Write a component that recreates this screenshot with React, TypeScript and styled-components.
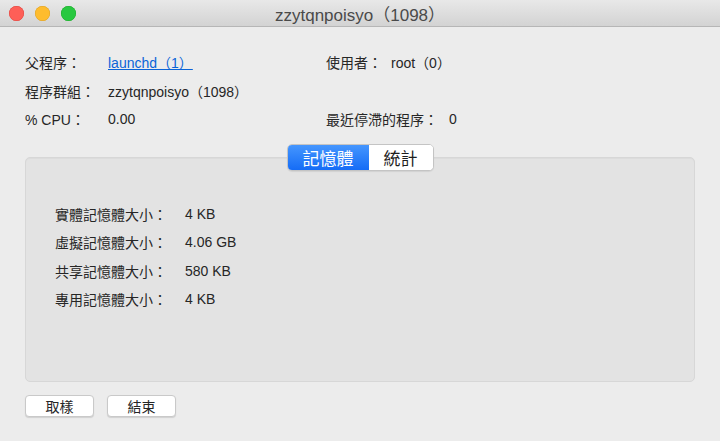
import React from "react";
import styled, { createGlobalStyle } from "styled-components";

const GlobalStyle = createGlobalStyle`
  html, body {
    margin: 0;
    padding: 0;
    background: #ececec;
  }
  body {
    font-family: "Liberation Sans", "Noto Sans CJK TC", sans-serif;
    color: #262626;
  }
`;

const Window = styled.div`
  width: 720px;
  height: 441px;
  display: flex;
  flex-direction: column;
  background: #ececec;
  overflow: hidden;
`;

const TitleBar = styled.div`
  height: 26px;
  flex: none;
  display: flex;
  align-items: center;
  position: relative;
  background: linear-gradient(#e8e8e8, #d3d3d3);
  border-bottom: 1px solid #b6b6b6;
`;

const Lights = styled.div`
  display: flex;
  gap: 11px;
  padding-left: 9px;
`;

const Light = styled.span<{ $fill: string; $edge: string }>`
  width: 15px;
  height: 15px;
  border-radius: 50%;
  background: ${(p) => p.$fill};
  box-shadow: inset 0 0 0 0.5px ${(p) => p.$edge};
`;

const Title = styled.div`
  position: absolute;
  left: 0;
  right: 0;
  text-align: center;
  font-size: 17px;
  color: #4a4a4a;
  pointer-events: none;
`;

const Body = styled.div`
  flex: 1;
  display: flex;
  flex-direction: column;
  padding: 21px 25px 0;
`;

const InfoGrid = styled.div`
  display: grid;
  grid-template-columns: 83px 218px 65px 1fr;
  grid-auto-rows: 28.5px;
  align-items: center;
  font-size: 14px;
`;

const Label = styled.span`
  white-space: nowrap;
`;

const Value = styled.span<{ $indent?: number }>`
  white-space: nowrap;
  padding-left: ${(p) => p.$indent ?? 0}px;
`;

const Link = styled.a`
  color: #0a64d8;
  text-decoration: underline;
  cursor: pointer;
`;

const TabArea = styled.div`
  display: flex;
  flex-direction: column;
  align-items: center;
  margin-top: 10px;
`;

const Segmented = styled.div`
  display: flex;
  height: 27px;
  border-radius: 5px;
  border: 1px solid #c4c4c4;
  box-sizing: border-box;
  overflow: hidden;
  position: relative;
  z-index: 1;
  background: #fff;
  box-shadow: 0 1px 1px rgba(0, 0, 0, 0.08);
`;

const Segment = styled.div<{ $active?: boolean; $w: number }>`
  width: ${(p) => p.$w}px;
  display: flex;
  align-items: center;
  justify-content: center;
  font-size: 17px;
  color: ${(p) => (p.$active ? "#fff" : "#1e1e1e")};
  background: ${(p) =>
    p.$active ? "linear-gradient(#4596fe, #156cf6)" : "#ffffff"};
`;

const Panel = styled.div`
  align-self: stretch;
  margin-top: -14px;
  height: 225px;
  box-sizing: border-box;
  background: #e3e3e3;
  border: 1px solid #d7d7d7;
  border-radius: 5px;
  box-shadow: inset 0 1px 1px rgba(0, 0, 0, 0.03);
  padding: 42px 0 0 29px;
`;

const MemGrid = styled.div`
  display: grid;
  grid-template-columns: 130px 1fr;
  grid-auto-rows: 28.5px;
  align-items: center;
  font-size: 14px;
`;

const ButtonRow = styled.div`
  display: flex;
  gap: 13px;
  margin-top: 13px;
`;

const Button = styled.button`
  width: 69px;
  height: 22px;
  padding: 0;
  background: #fff;
  border: 1px solid #c9c9c9;
  border-radius: 4px;
  box-shadow: 0 1px 1px rgba(0, 0, 0, 0.12);
  font-family: "Liberation Sans", "Noto Sans CJK TC", sans-serif;
  font-size: 14px;
  color: #262626;
`;

const memory = [
  ["實體記憶體大小：", "4 KB"],
  ["虛擬記憶體大小：", "4.06 GB"],
  ["共享記憶體大小：", "580 KB"],
  ["專用記憶體大小：", "4 KB"],
];

export default function App() {
  return (
    <>
      <GlobalStyle />
      <Window>
        <TitleBar>
          <Lights>
            <Light $fill="#fe5f57" $edge="#e0443e" />
            <Light $fill="#febc2e" $edge="#dea123" />
            <Light $fill="#28c840" $edge="#1aab29" />
          </Lights>
          <Title>zzytqnpoisyo（1098）</Title>
        </TitleBar>
        <Body>
          <InfoGrid>
            <Label>父程序：</Label>
            <Value>
              <Link>launchd（1）</Link>
            </Value>
            <Label>使用者：</Label>
            <Value>root（0）</Value>

            <Label>程序群組：</Label>
            <Value>zzytqnpoisyo（1098）</Value>
            <Label />
            <Value />

            <Label>% CPU：</Label>
            <Value>0.00</Value>
            <Label>最近停滯的程序：</Label>
            <Value $indent={58}>0</Value>
          </InfoGrid>

          <TabArea>
            <Segmented>
              <Segment $active $w={81}>
                記憶體
              </Segment>
              <Segment $w={64}>統計</Segment>
            </Segmented>
            <Panel>
              <MemGrid>
                {memory.map(([k, v]) => (
                  <React.Fragment key={k}>
                    <Label>{k}</Label>
                    <Value>{v}</Value>
                  </React.Fragment>
                ))}
              </MemGrid>
            </Panel>
          </TabArea>

          <ButtonRow>
            <Button>取樣</Button>
            <Button>結束</Button>
          </ButtonRow>
        </Body>
      </Window>
    </>
  );
}
